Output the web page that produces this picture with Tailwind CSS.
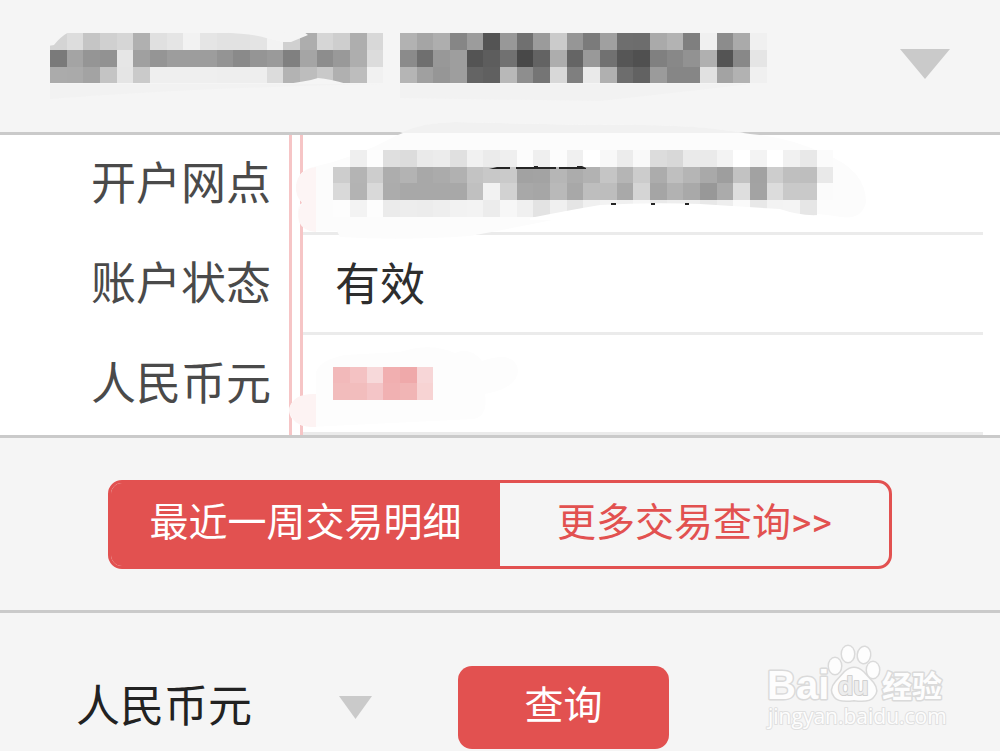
<!DOCTYPE html>
<html lang="zh-CN">
<head>
<meta charset="utf-8">
<meta name="viewport" content="width=device-width, initial-scale=1">
<title>账户查询</title>
<script src="https://cdn.jsdelivr.net/npm/@tailwindcss/browser@4"></script>
</head>
<body class="bg-[#f5f5f5] font-['Noto_Sans_CJK_SC',sans-serif] text-[#4a4a4a] overflow-x-hidden">
<main class="flex flex-col">
  <header class="border-b-3 border-[#cacaca]">
    <button type="button" aria-label="选择账户" aria-haspopup="listbox" class="flex h-[132px] w-full items-start justify-between pr-[50px]">
      <svg class="h-[120px] w-[840px]" viewBox="0 0 840 120" aria-hidden="true">
        <path d="M50 84H383Q190 88 50 99ZM400 84H750Q690 91 600 101L400 98Z" fill="#f2f2f2"/>
        <g id="account" transform="scale(16.6667)" shape-rendering="crispEdges"></g>
        <path d="M48 46L54 45Q60 37 69 32H48ZM220 32.500Q255 34 266 38L282 42H291L308 35L304 32ZM283 84Q305 82 318 78Q330 79 347 84Z" fill="#f5f5f5"/>
      </svg>
      <svg class="mt-[49px] h-[30px] w-[50px]" viewBox="0 0 50 30" aria-hidden="true"><path d="M0 0H50L25 30Z" fill="#cacaca"/></svg>
    </button>
  </header>

  <section class="relative border-b-3 border-[#cacaca] bg-white">
    <dl class="text-[45px] leading-[60px]">
      <div class="flex h-[100px]">
        <dt class="flex w-[292px] items-center justify-end border-r-3 border-[#f6c5c6] pr-[18px] pb-2">开户网点</dt>
        <dd class="mr-[17px] ml-2 flex flex-1 border-l-3 border-[#f6c5c6]"><div class="flex-1 border-b-3 border-[#ebebeb]"></div></dd>
      </div>
      <div class="flex h-[100px]">
        <dt class="flex w-[292px] items-center justify-end border-r-3 border-[#f6c5c6] pr-[18px] pb-2">账户状态</dt>
        <dd class="mr-[17px] ml-2 flex flex-1 border-l-3 border-[#f6c5c6]"><div class="flex flex-1 items-center border-b-3 border-[#ebebeb] pb-1 pl-8 text-[#2e2e2e]">有效</div></dd>
      </div>
      <div class="flex h-[100px]">
        <dt class="flex w-[292px] items-center justify-end border-r-3 border-[#f6c5c6] pr-[18px] pb-2">人民币元</dt>
        <dd class="mr-[17px] ml-2 flex flex-1 border-l-3 border-[#f6c5c6]"><div class="flex-1 border-b-3 border-[#ebebeb]"></div></dd>
      </div>
    </dl>
    <!-- Redaction over the branch and balance values -->
    <svg class="pointer-events-none absolute -top-[135px] left-0 h-[450px] w-[900px]" viewBox="0 0 900 450" aria-hidden="true">
      <path d="M313 167Q355 158 398 135Q425 122 455 122L590 125Q690 123 750 134Q790 137 825 154Q866 170 866 202Q862 222 835 216Q700 200 600 210Q530 225 470 236Q400 241 340 237L337 231H316Q304 231 300 220Q295 207 302 203Q292 190 299 176Q304 169 313 167Z" fill="#fcfcfc"/>
      <path d="M400 133Q425 122 455 122L590 125Q690 123 745 133Z" fill="#f1f1f1"/>
      <path d="M316 167Q299 169 296 185Q295 197 303 203Q296 210 299 222Q303 231 316 232Z" fill="#fdf5f5"/>
      <g id="branch" transform="scale(16.6667)" shape-rendering="crispEdges"></g>
      <path d="M530 218Q570 210 600 205Q650 202 700 204L780 209Q800 216 818 215V220H530Z" fill="#fff"/>
      <path d="M489 169L497 167H510V169ZM516 167H534V166H538V167H556V169H516ZM559 167H577V166H582L586 168V169H559ZM611 203H616V205H611ZM651 203H655V205H651ZM685 203H689V205H685Z" fill="#252525"/>
      <path d="M316 372Q320 360 345 355L400 352Q430 342 455 353Q470 346 482 361Q515 350 518 370Q518 388 485 394Q488 416 474 419L310 427Q290 425 289 410Q291 395 316 394Z" fill="#fdfdfd"/>
      <path d="M316 394Q293 393 289 409Q291 425 310 427H316Z" fill="#fdf3f3"/>
      <g id="balance" transform="scale(16.6667)" shape-rendering="crispEdges"></g>
    </svg>
  </section>

  <section class="border-b-3 border-[#cacaca] px-[108px] pt-[42px] pb-[41px]">
    <div class="flex h-[89px] overflow-hidden rounded-[14px] border-3 border-[#e25150] text-[39px] leading-[56px]">
      <button type="button" class="flex-1 bg-[#e25150] pb-3 text-white">最近一周交易明细</button>
      <button type="button" class="flex-1 pb-1 font-[Roboto,'Noto_Sans_CJK_SC',sans-serif] text-[#e25150]">更多交易查询&gt;&gt;</button>
    </div>
  </section>

  <form class="flex h-[138px] items-start">
    <div class="relative mt-[53px] ml-[76px] w-[296px]">
      <select aria-label="币种" class="h-[82px] w-full appearance-none bg-transparent pb-2 text-[44px] leading-[60px] text-[#222]"><option>人民币元</option></select>
      <svg class="pointer-events-none absolute top-[30px] right-0 h-[23px] w-[33px]" viewBox="0 0 33 23" aria-hidden="true"><path d="M0 0H33L16.500 23Z" fill="#cacaca"/></svg>
    </div>
    <button type="button" class="mt-[53px] ml-[86px] h-[83px] w-[211px] rounded-[14px] bg-[#e25150] pb-3 text-[39px] leading-[56px] text-white">查询</button>
    <svg class="mt-[17px] mr-[30px] ml-auto h-[110px] w-[220px]" viewBox="0 0 220 110" role="img" aria-label="Baidu 经验">
      <g fill="#fdfdfd" stroke="#dadada" stroke-width="3" paint-order="stroke" stroke-linejoin="round">
        <text x="17" y="69" font-family="Liberation Sans" font-size="40" font-weight="700">Bai</text>
        <ellipse cx="85" cy="36" rx="6" ry="8"/>
        <ellipse cx="98" cy="24" rx="6" ry="8"/>
        <ellipse cx="114" cy="25" rx="6" ry="8" transform="rotate(8 114 25)"/>
        <ellipse cx="123" cy="40" rx="6" ry="8"/>
        <path d="M95 42Q104 34 113 42L123 53Q129 61 123 67Q119 72 104 70Q89 72 85 67Q79 60 86 52Z"/>
        <text x="88" y="65" font-family="Liberation Sans" font-size="25" font-weight="700" fill="#ededed" stroke="#d0d0d0" stroke-width="2">du</text>
        <text x="132" y="67" font-family="Noto Sans CJK SC" font-size="30" font-weight="700">经验</text>
        <text x="18" y="94" font-family="Open Sans, sans-serif" font-size="21" stroke="#e0e0e0" stroke-width="2">jingyan.baidu.com</text>
      </g>
    </svg>
  </form>
</main>
<script>
// Each mosaic is a list of rows of hex colours; "-" leaves the cell empty.
const mosaics = {
  account: { x: 3, y: 2, rows: [
    "d4 dd c5 d0 d6 b0 e0 e5 f2 e5 e2 e2 e4 f3 d0 ad d6 ce ae d8 - b2 a5 ae 86 9c 54 98 70 9b cb 96 7b a0 6e 6d aa b3 7f f0 8c aa f0",
    "7a a4 95 92 e6 a0 95 9d 9d 9d 94 8a 95 9a 80 a5 8d 99 ae dc - 8b 6f 98 9e 54 5d 71 48 63 ad 65 99 71 56 50 80 88 92 b0 54 88 e5",
    "ab aa a3 c4 e5 ca ef ef ef ef ee ee ee dc b3 bd c9 b0 bd f1 - b5 a0 96 9e 64 60 b8 8e 75 d8 7f ea b0 6d 62 9b 86 86 e1 a3 b2 f0"] },
  branch: { x: 20, y: 9, rows: [
    "- ef fd df dc ea ec e0 f1 eb ef fc ef fc f0 ff f8 ec f9 dc d8 ea ea f3 ff f3 ff f1 e8 fb",
    "cd b4 cd ad b3 a8 ab b1 c3 c8 ca a2 a3 b6 ac b2 c5 b5 cc ac bf b5 a9 9e c2 a2 cd bf be e9",
    "d9 b3 d9 ac a8 a8 a8 a8 c0 f2 d2 a8 a6 b9 a8 be bd a9 d5 a5 b2 a9 98 ab de a3 dc c9 c9 fb",
    "fd f3 fd eb ed ec ee f2 f3 ec f7 f0 e3 f0 e5 f0 f3 f0 f6 ea ee ee e8 ee fa e8 f3 f4 e6 -"] },
  balance: { x: 20, y: 22, rows: [
    "f2b9ba f4c2c3 f7d9da f1afb0 efa9aa f7d6d7",
    "f2bcbc f2bdbd f4c5c7 f1b1b2 f1b5b5 f7d3d3"] }
};
for (const [id, m] of Object.entries(mosaics)) {
  const group = document.getElementById(id);
  m.rows.forEach((row, r) => row.split(" ").forEach((c, i) => {
    if (c === "-") return;
    const cell = document.createElementNS("http://www.w3.org/2000/svg", "rect");
    cell.setAttribute("x", m.x + i);
    cell.setAttribute("y", m.y + r);
    cell.setAttribute("width", 1);
    cell.setAttribute("height", 1);
    cell.setAttribute("fill", "#" + (c.length === 2 ? c + c + c : c));
    group.append(cell);
  }));
}
</script>
</body>
</html>
